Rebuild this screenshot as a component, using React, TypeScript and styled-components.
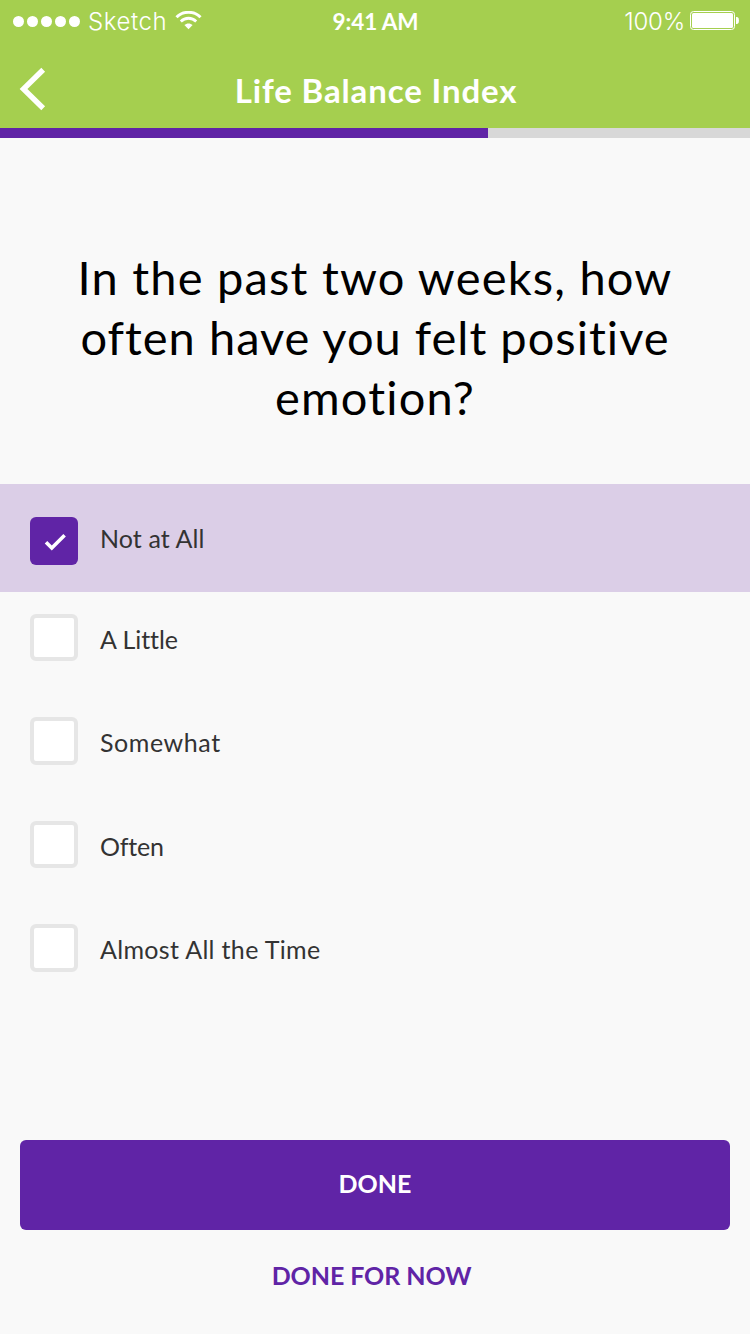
import React, { useState } from "react";
import styled, { createGlobalStyle } from "styled-components";

const purple = "#6024a6";

const GlobalStyle = createGlobalStyle`
  * { box-sizing: border-box; }
  body { margin: 0; background: #f9f9f9; font-family: Lato, "Open Sans", sans-serif; }
  button { border: 0; padding: 0; background: none; font: inherit; cursor: pointer; }
`;

const Screen = styled.div`
  width: 750px;
  height: 1334px;
  display: flex;
  flex-direction: column;
  background: #f9f9f9;
  overflow: hidden;
`;

const Header = styled.header`
  height: 128px;
  background: #a5cf4f;
  color: #fff;
`;

const StatusBar = styled.div`
  height: 40px;
  display: grid;
  grid-template-columns: 1fr auto 1fr;
  align-items: center;
  padding: 2px 11px 0 13px;
  font-size: 24px;
  line-height: 38px;
`;

const Carrier = styled.div`
  display: flex;
  align-items: center;
  font-family: Inter, sans-serif;
  font-weight: 300;
  letter-spacing: 0.6px;
`;

const StatusText = styled.span`
  padding-top: 1px;
`;

const SignalDots = styled.div`
  display: flex;
  gap: 3px;
  margin-right: 8px;
`;

const Dot = styled.i`
  width: 11px;
  height: 11px;
  border-radius: 50%;
  background: #fff;
`;

const WifiIcon = styled.svg`
  display: block;
  margin-left: 8px;
  margin-top: -2px;
`;

const Clock = styled.div`
  padding-top: 1px;
  margin-left: -1px;
  font-size: 22.5px;
  font-weight: 700;
  letter-spacing: -0.1px;
`;

const Power = styled(Carrier)`
  justify-content: flex-end;
  letter-spacing: -0.2px;
`;

const BatteryIcon = styled.svg`
  display: block;
  margin-left: 5px;
  margin-top: -2px;
`;

const NavBar = styled.div`
  height: 88px;
  display: grid;
  grid-template-columns: 80px 1fr 80px;
`;

const BackButton = styled.button`
  height: 88px;
  display: flex;
  align-items: flex-start;
  padding: 26px 0 0 18px;
  svg { display: block; }
`;

const Title = styled.h1`
  margin: 0;
  padding-left: 2px;
  font-size: 33px;
  font-weight: 700;
  line-height: 100px;
  text-align: center;
  white-space: nowrap;
  letter-spacing: 0.87px;
`;

const Progress = styled.div`
  height: 10px;
  flex: none;
  background: #d8d8d8;
`;

const ProgressFill = styled.div`
  height: 10px;
  background: ${purple};
`;

const Question = styled.h2`
  height: 346px;
  margin: 0;
  padding-top: 109px;
  color: #000;
  font-size: 47px;
  font-weight: 400;
  line-height: 60px;
  text-align: center;
`;

const QuestionLine = styled.span<{ $tracking: number }>`
  display: block;
  white-space: nowrap;
  letter-spacing: ${(p) => p.$tracking}px;
`;

const Options = styled.div`
  flex: 1;
`;

const Option = styled.div<{ $selected: boolean }>`
  display: flex;
  align-items: flex-start;
  height: ${(p) => (p.$selected ? "108px" : "103.4px")};
  padding: ${(p) => (p.$selected ? "33px" : "21.8px")} 30px 0;
  background: ${(p) => (p.$selected ? "#dbcee7" : "transparent")};
  cursor: pointer;
`;

const Box = styled.div<{ $selected: boolean }>`
  width: 48px;
  height: ${(p) => (p.$selected ? "48px" : "47.6px")};
  flex: none;
  border: ${(p) => (p.$selected ? "0" : "4px solid #e6e6e6")};
  border-radius: 6px;
  background: ${(p) => (p.$selected ? purple : "#fff")};
  svg { display: block; }
`;

const Label = styled.span<{ $selected: boolean; $tracking: number }>`
  margin-left: 22px;
  padding-top: ${(p) => (p.$selected ? "0" : "4px")};
  color: #333;
  font-size: 25px;
  line-height: 42px;
  letter-spacing: ${(p) => p.$tracking}px;
`;

const Footer = styled.footer`
  height: 194px;
  padding: 0 20px;
  display: flex;
  flex-direction: column;
`;

const DoneButton = styled.button`
  && {
    height: 90px;
    padding-bottom: 4px;
    border-radius: 6px;
    background: ${purple};
    color: #fff;
    font-size: 25px;
    font-weight: 700;
    line-height: 86px;
  }
`;

const LaterButton = styled.button`
  && {
    height: 90px;
    padding-right: 7px;
    color: ${purple};
    font-size: 25px;
    font-weight: 700;
    line-height: 90px;
    letter-spacing: -0.08px;
  }
`;

const question = [
  { text: "In the past two weeks, how", tracking: 1.2 },
  { text: "often have you felt positive", tracking: 1.01 },
  { text: "emotion?", tracking: 1.15 },
];

const options = [
  { text: "Not at All", tracking: 0.1 },
  { text: "A Little", tracking: -0.05 },
  { text: "Somewhat", tracking: 0.58 },
  { text: "Often", tracking: -0.2 },
  { text: "Almost All the Time", tracking: 0.33 },
];

export default function App() {
  const [selected, setSelected] = useState(0);
  return (
    <>
      <GlobalStyle />
      <Screen>
        <Header>
          <StatusBar>
            <Carrier>
              <SignalDots>
                {[0, 1, 2, 3, 4].map((n) => (
                  <Dot key={n} />
                ))}
              </SignalDots>
              <StatusText>Sketch</StatusText>
              <WifiIcon width="27" height="19" viewBox="0 0 27 19" fill="none">
                <path d="M1.5 6.2C8 -0.3 19 -0.3 25.5 6.2" stroke="#fff" strokeWidth="3" />
                <path d="M5.8 10.4C10.2 6.2 16.8 6.2 21.2 10.4" stroke="#fff" strokeWidth="2.8" />
                <path d="M9.4 14.1C11.7 11.8 15.3 11.8 17.6 14.1L13.5 18.2Z" fill="#fff" />
              </WifiIcon>
            </Carrier>
            <Clock>9:41 AM</Clock>
            <Power>
              <StatusText>100%</StatusText>
              <BatteryIcon width="49" height="19" viewBox="0 0 49 19">
                <rect x="0.5" y="0.5" width="44" height="18" rx="3" fill="none" stroke="#fff" />
                <rect x="2" y="2" width="41" height="15" rx="1.5" fill="#fff" />
                <path d="M46 6h1.2Q49 6.4 49 9.5T47.2 13H46Z" fill="#fff" />
              </BatteryIcon>
            </Power>
          </StatusBar>
          <NavBar>
            <BackButton aria-label="Back">
              <svg width="30" height="46" viewBox="0 0 30 46" fill="none">
                <path d="M25.2 3.8L5.5 23L25.2 42.2" stroke="#fff" strokeWidth="5.4" />
              </svg>
            </BackButton>
            <Title>Life Balance Index</Title>
          </NavBar>
        </Header>
        <Progress>
          <ProgressFill style={{ width: `${(488 / 750) * 100}%` }} />
        </Progress>
        <Question>
          {question.map((line) => (
            <QuestionLine key={line.text} $tracking={line.tracking}>
              {line.text}
            </QuestionLine>
          ))}
        </Question>
        <Options>
          {options.map((option, i) => (
            <Option key={option.text} $selected={i === selected} onClick={() => setSelected(i)}>
              <Box $selected={i === selected}>
                {i === selected && (
                  <svg width="48" height="48" viewBox="0 0 48 48" fill="none">
                    <path d="M16 25.2L21.8 31L34.6 18.3" stroke="#fff" strokeWidth="3.6" />
                  </svg>
                )}
              </Box>
              <Label $selected={i === selected} $tracking={option.tracking}>
                {option.text}
              </Label>
            </Option>
          ))}
        </Options>
        <Footer>
          <DoneButton>DONE</DoneButton>
          <LaterButton>DONE FOR NOW</LaterButton>
        </Footer>
      </Screen>
    </>
  );
}
